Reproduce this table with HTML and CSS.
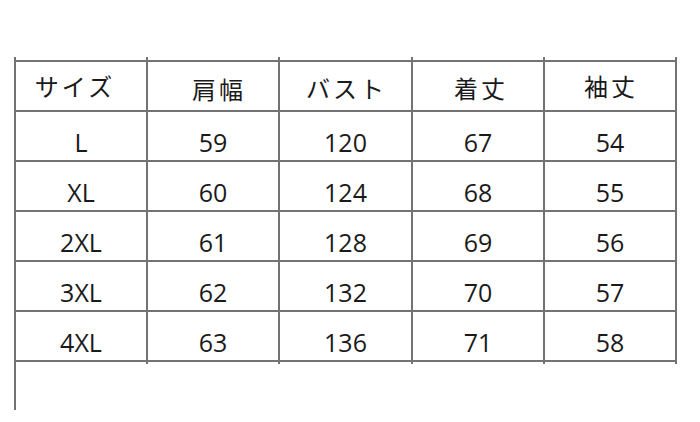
FILE: index.html
```html
<!DOCTYPE html>
<html lang="ja">
<head>
<meta charset="utf-8">
<link rel="stylesheet" href="styles.css">
</head>
<body>
<div class="page">
<div class="size-grid">
<div class="cell head h1">サイズ</div>
<div class="cell head h2">肩幅</div>
<div class="cell head h3">バスト</div>
<div class="cell head h4">着丈</div>
<div class="cell head h5">袖丈</div>

<div class="cell">L</div><div class="cell">59</div><div class="cell">120</div><div class="cell">67</div><div class="cell">54</div>
<div class="cell">XL</div><div class="cell">60</div><div class="cell">124</div><div class="cell">68</div><div class="cell">55</div>
<div class="cell">2XL</div><div class="cell">61</div><div class="cell">128</div><div class="cell">69</div><div class="cell">56</div>
<div class="cell">3XL</div><div class="cell">62</div><div class="cell">132</div><div class="cell">70</div><div class="cell">57</div>
<div class="cell last">4XL</div><div class="cell last">63</div><div class="cell last">136</div><div class="cell last">71</div><div class="cell last">58</div>
</div>
<div class="stub"></div>
</div>
</body>
</html>
```
FILE: styles.css
```css
html, body {
  margin: 0;
  padding: 0;
  background: #ffffff;
}
.page {
  padding-top: 60px;
  padding-left: 14px;
}
.size-grid {
  display: grid;
  grid-template-columns: 132px 132px 133px 132px 132px;
  grid-auto-rows: 50px;
  width: max-content;
  border-top: 2px solid #737373;
  border-left: 2px solid #737373;
  color: #1a1a1a;
}
.cell {
  position: relative;
  box-sizing: border-box;
  border-right: 2px solid #737373;
  border-bottom: 2px solid #737373;
  display: flex;
  align-items: center;
  justify-content: center;
  font-family: "Open Sans", "Noto Sans", sans-serif;
  font-size: 25px;
  line-height: 30px;
  padding-top: 12px;
}
.cell.head {
  font-family: "Noto Sans CJK JP", "Noto Sans CJK SC", sans-serif;
  font-size: 24px;
  letter-spacing: 3px;
  padding-top: 0;
}
.cell.head::before {
  content: "";
  position: absolute;
  right: -2px;
  top: -5px;
  width: 2px;
  height: 3px;
  background: #737373;
}
.cell.h1::after {
  content: "";
  position: absolute;
  left: -2px;
  top: -5px;
  width: 2px;
  height: 3px;
  background: #737373;
}
.cell.last::before {
  content: "";
  position: absolute;
  right: -2px;
  bottom: -4px;
  width: 2px;
  height: 2px;
  background: #737373;
}
.cell.h1 { padding-right: 12px; padding-top: 0; }
.cell.h2 { padding-left: 12px; padding-top: 6px; }
.cell.h3 { padding-left: 2px; padding-top: 4px; }
.cell.h4 { padding-left: 6px; padding-top: 4px; }
.cell.h5 { padding-left: 2px; padding-top: 0; }
.stub {
  width: 0;
  height: 48px;
  border-left: 2px solid #737373;
}
```
